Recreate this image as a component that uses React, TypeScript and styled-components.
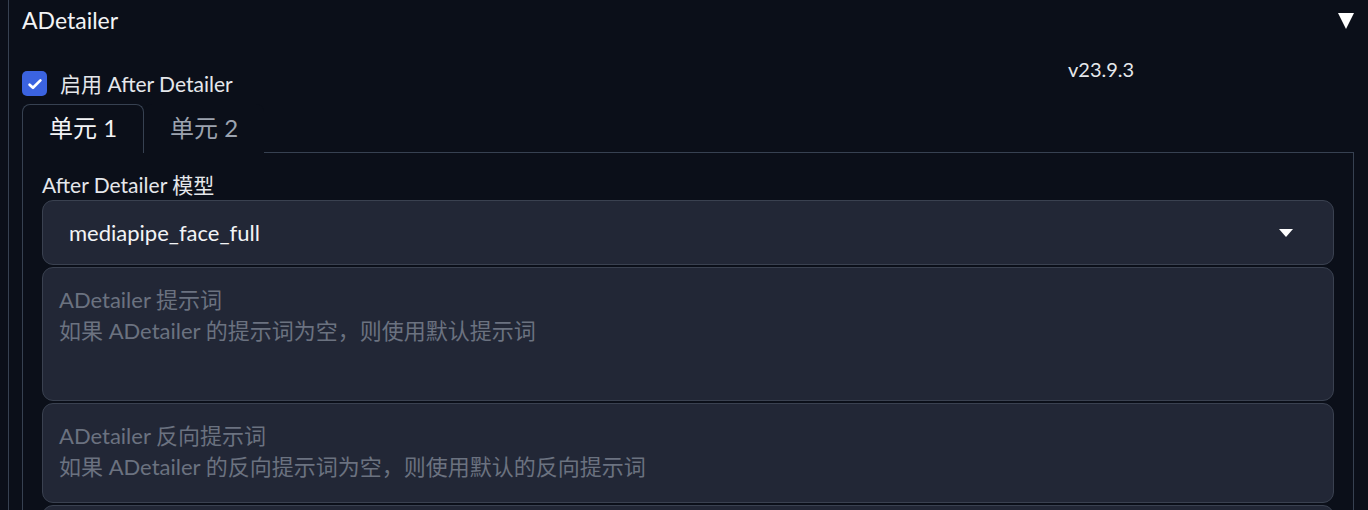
import React from "react";
import styled, { createGlobalStyle } from "styled-components";

const Global = createGlobalStyle`
  html, body { margin: 0; padding: 0; background: #0b0f19; }
  body {
    font-family: Lato, "Noto Sans CJK SC", sans-serif;
    color: #e5e7eb;
    overflow: hidden;
  }
`;

const Page = styled.div`
  padding: 0 0 0 8px;
  height: 510px;
  overflow: hidden;
`;

const Block = styled.div`
  border-left: 1px solid #374151;
  padding: 0 13px 0 13px;
  min-height: 520px;
`;

const Header = styled.div`
  display: flex;
  align-items: center;
  justify-content: space-between;
  height: 40px;
  font-size: 23px;
  color: #f3f4f6;
`;

const Caret = styled.svg`
  margin-right: 1px;
  margin-top: 1px;
`;

const TopRow = styled.div`
  display: grid;
  grid-template-columns: 1046px 1fr;
  margin-top: 16px;
  height: 48px;
`;

const CheckLabel = styled.label`
  display: flex;
  align-items: center;
  gap: 13px;
  margin-top: 15px;
  align-self: start;
  font-size: 21px;
  height: 25px;
  white-space: nowrap;
`;

const LabelText = styled.span`
  margin-top: -2px;
`;

const Box = styled.span`
  width: 25px;
  height: 25px;
  border-radius: 5px;
  background: #3b63e0;
  display: flex;
  align-items: center;
  justify-content: center;
`;

const Version = styled.div`
  font-size: 20px;
  padding-top: 1px;
`;

const Tabs = styled.div`
  display: flex;
  height: 48px;
`;

const Tab = styled.div<{ $active?: boolean }>`
  box-sizing: border-box;
  height: 49px;
  padding: 0 ${(p) => (p.$active ? "26px" : "25px")} 6px;
  display: flex;
  align-items: center;
  white-space: nowrap;
  font-size: 24px;
  color: ${(p) => (p.$active ? "#f3f4f6" : "#9ca3af")};
  border: 1px solid ${(p) => (p.$active ? "#374151" : "transparent")};
  border-bottom: none;
  border-radius: 8px 8px 0 0;
  background: #0b0f19;
  position: relative;
  z-index: 1;
`;

const Panel = styled.div`
  border: 1px solid #374151;
  padding: 19px 19px 0 19px;
  width: 1332px;
  box-sizing: border-box;
  display: flex;
  flex-direction: column;
  gap: 2px;
`;

const FieldLabel = styled.div`
  font-size: 21px;
  line-height: 26px;
  color: #e5e7eb;
`;

const Select = styled.div`
  box-sizing: border-box;
  height: 65px;
  background: #222736;
  border: 1px solid #3a4150;
  border-radius: 11px;
  display: flex;
  align-items: center;
  justify-content: space-between;
  padding: 0 40px 0 26px;
  font-size: 22px;
  color: #f3f4f6;
`;

const TextArea = styled.div<{ $h: number }>`
  box-sizing: border-box;
  height: ${(p) => p.$h}px;
  background: #222736;
  border: 1px solid #3a4150;
  border-radius: 11px;
  padding: 16px 16px;
  font-size: 22px;
  line-height: 31px;
  color: #6b7280;
  white-space: nowrap;
`;

export default function App() {
  return (
    <>
      <Global />
      <Page>
        <Block>
          <Header>
            <span>ADetailer</span>
            <Caret width="16" height="16" viewBox="0 0 16 16">
              <path d="M0 0h16L8 16z" fill="#fff" />
            </Caret>
          </Header>
          <TopRow>
            <CheckLabel>
              <Box>
                <svg width="18" height="18" viewBox="0 0 16 16">
                  <path d="M3.2 8.6l3 2.8L12.8 4.8" fill="none" stroke="#fff" strokeWidth="2.4" strokeLinecap="round" strokeLinejoin="round" />
                </svg>
              </Box>
              <LabelText>启用 After Detailer</LabelText>
            </CheckLabel>
            <Version>v23.9.3</Version>
          </TopRow>
          <Tabs>
            <Tab $active>单元 1</Tab>
            <Tab>单元 2</Tab>
          </Tabs>
          <Panel>
            <FieldLabel>After Detailer 模型</FieldLabel>
            <Select>
              <span>mediapipe_face_full</span>
              <svg width="14" height="8" viewBox="0 0 14 8">
                <path d="M0 0h14L7 8z" fill="#fff" />
              </svg>
            </Select>
            <TextArea $h={134}>
              ADetailer 提示词
              <br />
              如果 ADetailer 的提示词为空，则使用默认提示词
            </TextArea>
            <TextArea $h={100}>
              ADetailer 反向提示词
              <br />
              如果 ADetailer 的反向提示词为空，则使用默认的反向提示词
            </TextArea>
            <TextArea $h={100}> </TextArea>
          </Panel>
        </Block>
      </Page>
    </>
  );
}
